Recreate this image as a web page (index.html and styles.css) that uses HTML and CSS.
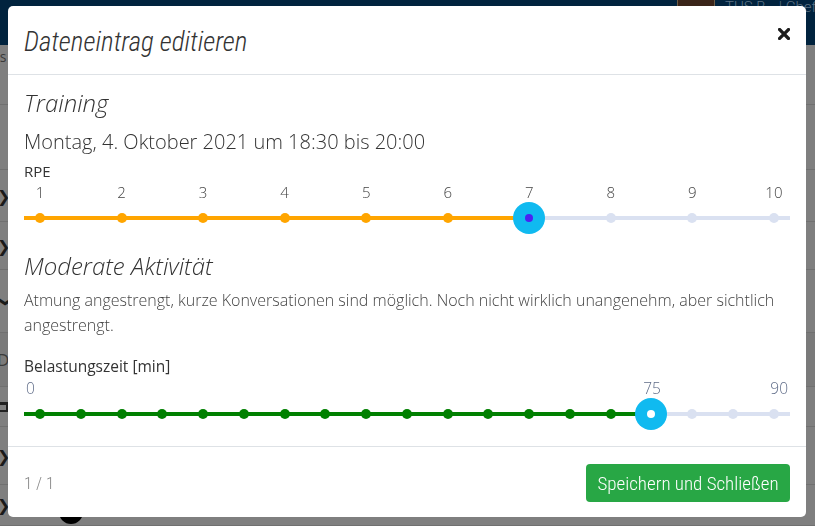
FILE: index.html
```html
<!DOCTYPE html>
<html lang="de">
<head>
<meta charset="utf-8">
<title>Dateneintrag editieren</title>
<link rel="stylesheet" href="styles.css">
</head>
<body>
<div class="page">
  <header class="nav">
    <div class="nav-user">
      <span class="avatar"></span>
      <span class="nav-name">TUS B… | Cheftrainer</span>
    </div>
  </header>
  <div class="list">
    <div class="row"><span class="frag">es</span></div>
    <div class="row"></div>
    <div class="row"><span class="chev">&#x276F;</span></div>
    <div class="row"><span class="chev">&#x276F;</span></div>
    <div class="row"><span class="chev down">&#x276F;</span></div>
    <div class="row shade"><span class="frag big">D</span></div>
    <div class="row"><span class="cal"></span></div>
    <div class="row"><span class="chev">&#x276F;</span></div>
    <div class="row"><span class="chev">&#x276F;</span><span class="blob"></span></div>
  </div>
</div>

<div class="modal">
  <div class="modal-header">
    <h5 class="modal-title"><span>Dateneintrag editieren</span></h5>
    <button class="close" type="button" aria-label="Close">
      <svg width="12" height="12" viewBox="0 0 12 12"><path d="M1.5 1.5 L10.5 10.5 M10.5 1.5 L1.5 10.5" stroke="#1d1d1d" stroke-width="3.2" stroke-linecap="square" fill="none"/></svg>
    </button>
  </div>
  <div class="modal-body">
    <h4 class="sec-title">Training</h4>
    <div class="date">Montag, 4. Oktober 2021 um 18:30 bis 20:00</div>
    <div class="field-label">RPE</div>
    <div class="slider orange" style="--fill: 505px">
      <div class="legend">
        <span>1</span><span>2</span><span>3</span><span>4</span><span>5</span><span>6</span><span>7</span><span>8</span><span>9</span><span>10</span>
      </div>
      <div class="track">
        <span class="tick on"></span><span class="tick on"></span><span class="tick on"></span><span class="tick on"></span><span class="tick on"></span><span class="tick on"></span><span class="tick handle violet"></span><span class="tick"></span><span class="tick"></span><span class="tick"></span>
      </div>
    </div>
    <h4 class="sec-title second">Moderate Aktivität</h4>
    <p class="desc">Atmung angestrengt, kurze Konversationen sind möglich. Noch nicht wirklich unangenehm, aber sichtlich angestrengt.</p>
    <div class="field-label second">Belastungszeit [min]</div>
    <div class="slider green" style="--fill: 628px">
      <div class="limits">
        <span>0</span><span>90</span>
        <span class="value" style="left: 628px">75</span>
      </div>
      <div class="track">
        <span class="tick on"></span><span class="tick on"></span><span class="tick on"></span><span class="tick on"></span><span class="tick on"></span><span class="tick on"></span><span class="tick on"></span><span class="tick on"></span><span class="tick on"></span><span class="tick on"></span><span class="tick on"></span><span class="tick on"></span><span class="tick on"></span><span class="tick on"></span><span class="tick on"></span><span class="tick handle white"></span><span class="tick"></span><span class="tick"></span><span class="tick"></span>
      </div>
    </div>
  </div>
  <div class="modal-footer">
    <span class="pager">1 / 1</span>
    <button class="btn-save" type="button">Speichern und Schließen</button>
  </div>
</div>
</body>
</html>
```

FILE: styles.css
```css
* { box-sizing: border-box; }
html, body { margin: 0; padding: 0; }
body {
  width: 815px;
  height: 526px;
  overflow: hidden;
  font-family: "Open Sans", "DejaVu Sans", sans-serif;
  background: #7f7f7f;
}

/* dimmed page behind the modal */
.page { height: 526px; display: flex; flex-direction: column; }
.nav {
  height: 45px;
  background: #01233e;
  display: flex;
  padding-left: 677px;
  overflow: hidden;
}
.nav-user { display: flex; gap: 10px; align-items: flex-start; white-space: nowrap; }
.avatar {
  flex: none;
  width: 38px; height: 8px;
  background: #3a2418;
  border: 1px solid #6b5a45;
  border-top: 0;
}
.nav-name { color: #5d7284; font-size: 15px; line-height: 18px; font-family: Roboto, sans-serif; font-weight: 300; margin-top: -2px; }
.list {
  flex: 1;
  display: grid;
  grid-template-rows: 60px 65px 52px 48px 63px 54px 40px 58px 1fr;
}
.row {
  border-bottom: 1px solid #707070;
  display: flex;
  align-items: center;
  position: relative;
}
.row.shade { background: #7a7a7a; }
.frag { color: #3a3a3a; font-size: 14px; margin-left: -8px; align-self: flex-start; margin-top: 2px; }
.frag.big { font-size: 17px; margin-left: -3px; align-self: center; margin-top: 0; }
.chev { color: #1a1a1a; font-size: 16px; margin-left: -3px; }
.chev.down { transform: rotate(90deg); margin-left: 0; }
.cal { width: 10px; height: 10px; border: 2px solid #222; border-top-width: 3px; margin-left: -2px; }
.blob { position: absolute; left: 59px; top: 15px; width: 24px; height: 24px; border-radius: 50%; background: #000; }

/* modal */
.modal {
  position: fixed;
  left: 8px;
  top: 6px;
  width: 798px;
  height: 511px;
  background: #fff;
  border-radius: 5px;
  display: flex;
  flex-direction: column;
  color: #333;
}
.modal-header {
  height: 69px;
  border-bottom: 1px solid #dee2e6;
  display: flex;
  justify-content: space-between;
  padding: 0 16px;
}
.modal-title {
  margin: 0;
  font-family: "Liberation Sans Narrow", "Roboto Condensed", Roboto, sans-serif;
  font-weight: 300;
  font-style: italic;
  font-size: 27px;
  line-height: 32px;
  color: #333;
  padding-top: 20px;
}
.close {
  border: 0;
  background: none;
  padding: 0;
  margin: 22px 0 0 0;
  width: 12px;
  height: 12px;
  display: flex;
}
.modal-body { flex: 1; padding: 13px 16px 0; }
.sec-title {
  margin: 0;
  font-style: italic;
  font-weight: 300;
  font-size: 24px;
  line-height: 30px;
  color: #333;
}
.sec-title.second { margin-top: 17px; }
.date { margin-top: 10px; font-size: 20px; line-height: 28px; font-weight: 300; color: #333; }
.field-label { margin-top: 5px; font-size: 15px; line-height: 20px; color: #333; }
.field-label.second { margin-top: 17px; font-size: 15.5px; line-height: 22px; }
.desc { margin: 7px 0 0; font-size: 16px; line-height: 25px; font-weight: 300; color: #444; }

.slider { margin-top: 1px; }
.legend {
  display: flex;
  justify-content: space-between;
  padding: 0 1px;
  font-size: 15px;
  line-height: 20px;
  font-weight: 300;
  color: #444;
}
.legend span { width: 30px; text-align: center; }
.limits {
  position: relative;
  display: flex;
  justify-content: space-between;
  font-size: 15.5px;
  line-height: 20px;
  font-weight: 300;
  color: #5f6c88;
  padding: 0 2px 0 2px;
}
.limits .value { position: absolute; top: 0; transform: translateX(-50%); }
.track {
  height: 32px;
  display: flex;
  align-items: center;
  justify-content: space-between;
  padding: 0 11px;
  background:
    linear-gradient(var(--c), var(--c)) no-repeat 0 50% / var(--fill) 4px,
    linear-gradient(#dae1f1, #dae1f1) no-repeat 0 50% / 100% 4px;
}
.orange { --c: #ffa500; }
.green { --c: #008000; }
.tick { width: 10px; height: 10px; border-radius: 50%; background: #dae1f1; position: relative; }
.tick.on { background: var(--c); }
.tick.handle::before {
  content: "";
  position: absolute;
  left: 50%; top: 50%;
  width: 32px; height: 32px;
  transform: translate(-50%, -50%);
  border-radius: 50%;
  background: #10baf0;
}
.tick.handle::after {
  content: "";
  position: absolute;
  left: 50%; top: 50%;
  width: 8px; height: 8px;
  transform: translate(-50%, -50%);
  border-radius: 50%;
}
.violet::after { background: #4a22f2; }
.white::after { background: #fff; }

.modal-footer {
  height: 71px;
  border-top: 1px solid #dee2e6;
  display: flex;
  justify-content: space-between;
  align-items: center;
  padding: 2px 16px 0;
}
.pager {
  font-family: "Liberation Sans Narrow", "Roboto Condensed", Roboto, sans-serif;
  font-weight: 300;
  font-size: 17px;
  color: #888;
}
.btn-save {
  height: 38px;
  width: 204px;
  border: 0;
  border-radius: 4px;
  background: #28a745;
  color: #fff;
  font-family: "Liberation Sans Narrow", "Roboto Condensed", Roboto, sans-serif;
  font-weight: 300;
  font-size: 19px;
  padding: 0;
}
```
